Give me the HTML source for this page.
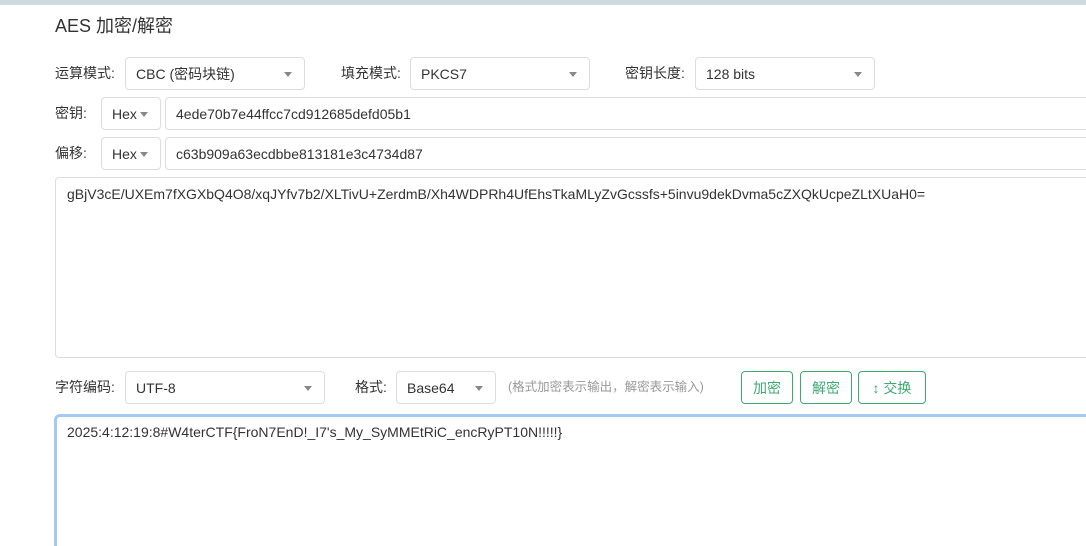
<!DOCTYPE html>
<html><head><meta charset="utf-8"><style>
html,body{margin:0;width:1086px;height:546px;overflow:hidden}
body{background:#fff;font-family:"Liberation Sans","Noto Sans CJK SC",sans-serif;color:#333;font-size:14px;position:relative}
.a{position:absolute}
.lab{position:absolute;font-size:14px;line-height:20px;color:#333}
.box{position:absolute;border:1px solid #ddd;border-radius:4px;box-sizing:border-box;background:#fff;font-size:14px;color:#333;padding-left:10px;display:flex;align-items:center}
.sel::after{content:"";position:absolute;right:12px;top:50%;margin-top:-2px;border-left:4px solid transparent;border-right:4px solid transparent;border-top:5px solid #888}
.btn{position:absolute;border:1px solid #3daa73;border-radius:4px;box-sizing:border-box;color:#3daa73;font-size:14px;display:flex;align-items:center;justify-content:center;height:33px;top:371px}
</style></head><body>
<div class="a" style="left:0;top:0;width:1086px;height:5px;background:#cddadf"></div>
<div class="a" style="left:55px;top:14px;font-size:18px;line-height:24px;color:#333">AES 加密/解密</div>

<div class="lab" style="left:55px;top:63px">运算模式:</div>
<div class="box sel" style="left:125px;top:57px;width:180px;height:33px">CBC (密码块链)</div>
<div class="lab" style="left:341px;top:63px">填充模式:</div>
<div class="box sel" style="left:410px;top:57px;width:180px;height:33px">PKCS7</div>
<div class="lab" style="left:625px;top:63px">密钥长度:</div>
<div class="box sel" style="left:695px;top:57px;width:180px;height:33px">128 bits</div>

<div class="lab" style="left:55px;top:103px">密钥:</div>
<div class="box sel" style="left:101px;top:97px;width:60px;height:33px">Hex</div>
<div class="box" style="left:165px;top:97px;width:940px;height:33px">4ede70b7e44ffcc7cd912685defd05b1</div>
<div class="lab" style="left:55px;top:143px">偏移:</div>
<div class="box sel" style="left:101px;top:137px;width:60px;height:33px">Hex</div>
<div class="box" style="left:165px;top:137px;width:940px;height:33px">c63b909a63ecdbbe813181e3c4734d87</div>

<div class="box" style="left:55px;top:177px;width:1050px;height:181px;align-items:flex-start;padding-top:8px;padding-left:11px;font-size:14px">gBjV3cE/UXEm7fXGXbQ4O8/xqJYfv7b2/XLTivU+ZerdmB/Xh4WDPRh4UfEhsTkaMLyZvGcssfs+5invu9dekDvma5cZXQkUcpeZLtXUaH0=</div>

<div class="lab" style="left:55px;top:377px">字符编码:</div>
<div class="box sel" style="left:125px;top:371px;width:200px;height:33px">UTF-8</div>
<div class="lab" style="left:355px;top:377px">格式:</div>
<div class="box sel" style="left:396px;top:371px;width:100px;height:33px">Base64</div>
<div class="lab" style="left:508px;top:377px;font-size:12.5px;color:#999">(格式加密表示输出，解密表示输入)</div>
<div class="btn" style="left:741px;width:52px">加密</div>
<div class="btn" style="left:800px;width:52px">解密</div>
<div class="btn" style="left:858px;width:68px">↕ 交换</div>

<div class="a" style="left:54px;top:414px;width:1060px;height:140px;border:3px solid #a6c8f5;border-radius:6px;box-sizing:border-box;background:#fff"></div>
<div class="a" style="left:67px;top:423px;font-size:14px;line-height:18px;color:#333">2025:4:12:19:8#W4terCTF{FroN7EnD!_I7's_My_SyMMEtRiC_encRyPT10N!!!!!}</div>
</body></html>
